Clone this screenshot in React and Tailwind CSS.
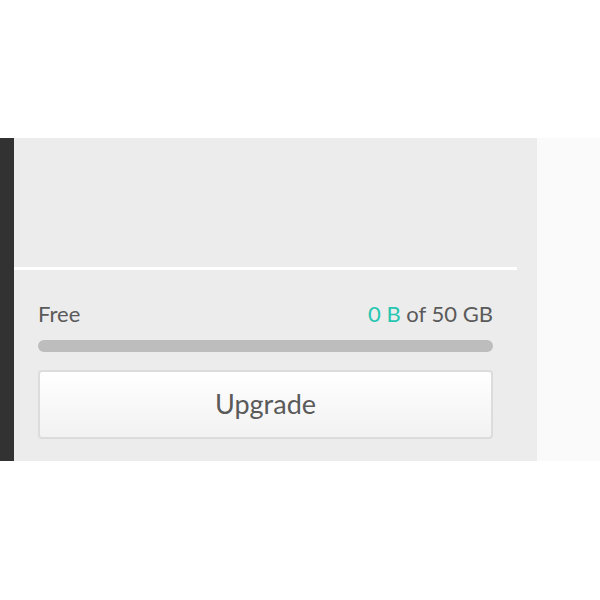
import React from "react";

function StorageMeter({ used, total }) {
  return (
    <div className="flex flex-col">
      <div className="flex justify-between items-center h-[28px] text-[22px] text-[#5a5a5a]">
        <span>Free</span>
        <span>
          <span className="text-[#26c6b0]">{used}</span> of {total}
        </span>
      </div>
      {/* usage bar, empty */}
      <div className="mt-[13px] h-[12px] rounded-full bg-[#bdbdbd]" />
    </div>
  );
}

export default function App() {
  return (
    <div className="w-[600px] h-[600px] pt-[138px] bg-white font-['Lato',sans-serif]">
      <div className="flex h-[323px]">
        <div className="w-[14px] bg-[#323232]" />
        <div className="flex flex-col w-[523px] bg-[#ececec]">
          <div className="h-[129px]" />
          <div className="mr-[20px] h-[3px] bg-white" />
          <div className="flex flex-col pl-[24px] pr-[44px] pt-[29px]">
            <StorageMeter used="0 B" total="50 GB" />
            <button className="mt-[18px] h-[69px] rounded-[4px] border-2 border-[#dcdcdc] bg-gradient-to-b from-white to-[#f2f2f2] text-[27px] text-[#5a5a5a]">
              Upgrade
            </button>
          </div>
        </div>
        <div className="flex-1 bg-[#fafafa]" />
      </div>
    </div>
  );
}
